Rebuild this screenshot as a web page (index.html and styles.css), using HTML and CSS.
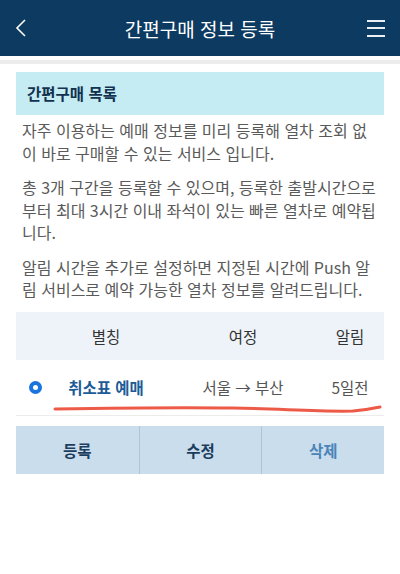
FILE: index.html
```html
<!DOCTYPE html>
<html lang="ko">
<head>
    <meta charset="UTF-8">
    <meta name="viewport" content="width=device-width, initial-scale=1.0">
    <title>간편구매 정보 등록</title>
    <link rel="stylesheet" href="styles.css">
</head>
<body>
    <header class="topbar">
        <a class="back" href="#">
            <svg width="12" height="18" viewBox="0 0 12 18"><path d="M10 1 L2 9 L10 17" fill="none" stroke="#fff" stroke-width="1.6"/></svg>
        </a>
        <h1>간편구매 정보 등록</h1>
        <a class="menu" href="#">
            <span></span><span></span><span></span>
        </a>
    </header>

    <div class="content">
        <h2 class="section-title">간편구매 목록</h2>
        <div class="desc">
            <p>자주 이용하는 예매 정보를 미리 등록해 열차 조회 없<br>이 바로 구매할 수 있는 서비스 입니다.</p>
            <p>총 3개 구간을 등록할 수 있으며, 등록한 출발시간으로부터 최대 3시간 이내 좌석이 있는 빠른 열차로 예약됩니다.</p>
            <p>알림 시간을 추가로 설정하면 지정된 시간에 Push 알림 서비스로 예약 가능한 열차 정보를 알려드립니다.</p>
        </div>

        <div class="list">
            <div class="row head">
                <span></span>
                <span>별칭</span>
                <span>여정</span>
                <span class="alarm">알림</span>
            </div>
            <div class="row item">
                <span class="radio"></span>
                <span class="name">취소표 예매</span>
                <span class="route">서울 → 부산</span>
                <span class="alarm">5일전</span>
                <svg class="mark" width="330" height="10" viewBox="0 0 330 10">
                    <path d="M2 5 C60 4 120 3 180 4 C230 5 270 8 300 7 C315 6 322 4 327 3" fill="none" stroke="#ee5a48" stroke-width="3" stroke-linecap="round"/>
                </svg>
            </div>
        </div>

        <div class="actions">
            <button>등록</button>
            <button>수정</button>
            <button class="soft">삭제</button>
        </div>
    </div>
</body>
</html>
```

FILE: styles.css
```css
body {
    margin: 0;
    background: #fff;
    font-family: "Noto Sans CJK KR", "Noto Sans", sans-serif;
}
.topbar {
    height: 56px;
    background: #0c3a61;
    display: flex;
    align-items: center;
    justify-content: space-between;
    padding: 0 15px;
    border-bottom: 4px solid #fff;
    box-shadow: 0 4px 0 #ececec;
}
.topbar h1 {
    margin: 0;
    color: #fff;
    font-size: 19px;
    font-weight: 400;
}
.back { display: flex; width: 18px; }
.menu {
    display: flex;
    flex-direction: column;
    gap: 5.5px;
    width: 18px;
}
.menu span {
    height: 2px;
    background: #e8eef4;
}
.content {
    padding: 12px 16px 0;
}
.section-title {
    margin: 0;
    background: #c5ecf3;
    color: #12324f;
    font-size: 15.5px;
    font-weight: 700;
    height: 43px;
    line-height: 43px;
    padding: 0 11px;
}
.desc {
    padding: 4px 0 0 6px;
    color: #5a5a5a;
    font-size: 16px;
    line-height: 22.5px;
    word-break: break-all;
}
.desc p { margin: 0 0 12px; }
.desc p:last-child { margin-bottom: 0; }
.list { margin-top: 11px; }
.row {
    display: grid;
    grid-template-columns: 38px 104px 170px 56px;
    align-items: center;
    text-align: center;
    font-size: 15.5px;
}
.row .alarm { padding-right: 12px; }
.head {
    height: 48px;
    background: #eef3f9;
    color: #333;
}
.item {
    position: relative;
    height: 55px;
    border-bottom: 1px solid #ececec;
    color: #555;
}
.radio {
    justify-self: center;
    width: 5px;
    height: 5px;
    border: 4px solid #1a74e0;
    border-radius: 50%;
}
.name {
    color: #1d5b97;
    font-weight: 700;
}
.mark {
    position: absolute;
    left: 37px;
    bottom: 1px;
}
.actions {
    display: grid;
    grid-template-columns: 1fr 1fr 1fr;
    margin-top: 10px;
    background: #c9ddec;
}
.actions button {
    height: 48px;
    border: none;
    background: none;
    font-family: inherit;
    font-size: 15.5px;
    font-weight: 700;
    color: #1c3d5e;
}
.actions button + button { border-left: 1px solid #afc5d7; }
.actions .soft { color: #4a84b8; }
```
